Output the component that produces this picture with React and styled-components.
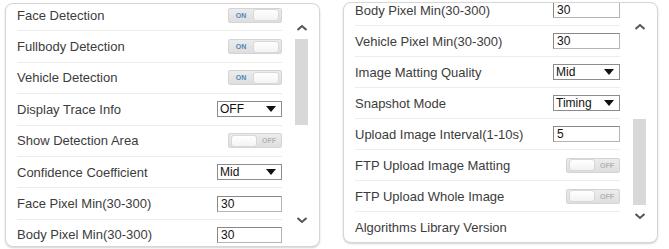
import styled, { createGlobalStyle } from 'styled-components';

const GlobalStyle = createGlobalStyle`
  body {
    margin: 0;
    background: #fff;
    font-family: "Liberation Sans", Arial, sans-serif;
  }
`;

const Page = styled.div`
  display: flex;
  gap: 23px;
  padding: 2px 5px;
  align-items: flex-start;
`;

const Panel = styled.div`
  width: 315px;
  height: ${(p) => p.$height}px;
  margin-top: ${(p) => p.$top}px;
  box-sizing: border-box;
  border: 1px solid #d6d6d6;
  border-radius: 8px;
  background: #fff;
  box-shadow: 0 1px 2px rgba(0, 0, 0, 0.18);
  display: flex;
  overflow: hidden;
`;

const List = styled.div`
  flex: 1;
  padding-left: 11px;
  margin-top: ${(p) => p.$offset}px;
`;

const Row = styled.div`
  height: ${(p) => p.$h}px;
  display: flex;
  align-items: center;
  justify-content: space-between;
  border-bottom: 1px solid #ececec;
  box-sizing: border-box;
`;

const Label = styled.span`
  font-size: 13px;
  color: #3c3c3c;
  white-space: nowrap;
`;

const Toggle = styled.div`
  width: 54px;
  height: 15px;
  box-sizing: border-box;
  border: 1px solid #d4d4d4;
  border-radius: 2px;
  background: linear-gradient(#ececec, #dedede);
  display: flex;
  flex-direction: ${(p) => (p.$on ? 'row' : 'row-reverse')};
  align-items: center;
  padding: 0 2px;
  gap: 2px;
`;

const ToggleText = styled.span`
  flex: 1;
  text-align: center;
  font-size: 7px;
  font-weight: bold;
  color: ${(p) => (p.$on ? '#4f86bd' : '#b4b4b4')};
`;

const Knob = styled.span`
  width: 24px;
  height: 10px;
  border-radius: 3px;
  background: linear-gradient(#ffffff, #f3f3f3);
  border: 1px solid #d8d8d8;
`;

const Box = styled.div`
  width: ${(p) => p.$w}px;
  height: 16px;
  box-sizing: border-box;
  background: #fff;
  display: flex;
  align-items: center;
  font-family: Arial, "Liberation Sans", sans-serif;
  font-size: 12px;
  color: #111;
  padding-left: 2px;
`;

const Select = styled(Box)`
  border: 1px solid #8c8c8c;
  justify-content: space-between;
  padding-right: 5px;
  &::after {
    content: '';
    border-left: 5px solid transparent;
    border-right: 5px solid transparent;
    border-top: 6px solid #111;
  }
`;

const Input = styled(Box)`
  border: 1px solid #b4b4b4;
  border-top-color: #888;
  border-left-color: #888;
  padding-left: 3px;
`;

const Scrollbar = styled.div`
  width: 13px;
  margin: 0 11px 0 13px;
  padding: 18px 0 20px;
  display: flex;
  flex-direction: column;
  align-items: center;
`;

const Arrow = styled.svg`
  width: 12px;
  height: 12px;
  flex: none;
`;

const Track = styled.div`
  flex: 1;
  width: 100%;
  margin: 5px 0;
  display: flex;
  flex-direction: column;
  justify-content: ${(p) => (p.$atEnd ? 'flex-end' : 'flex-start')};
`;

const Thumb = styled.div`
  height: 86px;
  background: #d8d8d8;
`;

const Control = ({ c, w }) => {
  if (!c) return null;
  if (c.type === 'toggle')
    return (
      <Toggle $on={c.on}>
        <ToggleText $on={c.on}>{c.on ? 'ON' : 'OFF'}</ToggleText>
        <Knob />
      </Toggle>
    );
  if (c.type === 'select') return <Select $w={w}>{c.value}</Select>;
  return <Input $w={w}>{c.value}</Input>;
};

const ScrollArrow = ({ up }) => (
  <Arrow viewBox="0 0 12 12">
    <polyline
      points={up ? '1.5,8 6,4 10.5,8' : '1.5,4 6,8 10.5,4'}
      fill="none"
      stroke="#555"
      strokeWidth="2"
    />
  </Arrow>
);

const leftRows = [
  ['Face Detection', { type: 'toggle', on: true }],
  ['Fullbody Detection', { type: 'toggle', on: true }],
  ['Vehicle Detection', { type: 'toggle', on: true }],
  ['Display Trace Info', { type: 'select', value: 'OFF' }],
  ['Show Detection Area', { type: 'toggle', on: false }],
  ['Confidence Coefficient', { type: 'select', value: 'Mid' }],
  ['Face Pixel Min(30-300)', { type: 'input', value: '30' }],
  ['Body Pixel Min(30-300)', { type: 'input', value: '30' }],
];

const rightRows = [
  ['Body Pixel Min(30-300)', { type: 'input', value: '30' }],
  ['Vehicle Pixel Min(30-300)', { type: 'input', value: '30' }],
  ['Image Matting Quality', { type: 'select', value: 'Mid' }],
  ['Snapshot Mode', { type: 'select', value: 'Timing' }],
  ['Upload Image Interval(1-10s)', { type: 'input', value: '5' }],
  ['FTP Upload Image Matting', { type: 'toggle', on: false }],
  ['FTP Upload Whole Image', { type: 'toggle', on: false }],
  ['Algorithms Library Version', null],
];

const SettingsPanel = ({ rows, rowHeight, offset, height, top, atEnd, boxWidth }) => (
  <Panel $height={height} $top={top}>
    <List $offset={offset}>
      {rows.map(([label, c]) => (
        <Row key={label} $h={rowHeight}>
          <Label>{label}</Label>
          <Control c={c} w={boxWidth} />
        </Row>
      ))}
    </List>
    <Scrollbar>
      <ScrollArrow up />
      <Track $atEnd={atEnd}>
        <Thumb />
      </Track>
      <ScrollArrow />
    </Scrollbar>
  </Panel>
);

export default function App() {
  return (
    <>
      <GlobalStyle />
      <Page>
        <SettingsPanel rows={leftRows} rowHeight={31.4} offset={-4} height={244} top={1} boxWidth={65} />
        <SettingsPanel rows={rightRows} rowHeight={31} offset={-8} height={241} top={0} boxWidth={67} atEnd />
      </Page>
    </>
  );
}
